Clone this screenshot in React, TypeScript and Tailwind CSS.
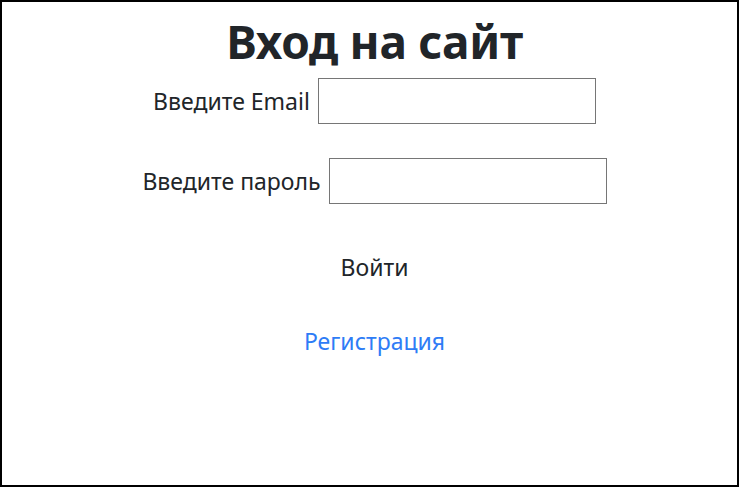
export default function App() {
  return (
    <div className="w-[739px] h-[487px] bg-black p-[2px] box-border">
      <div
        className="w-full h-full bg-white flex flex-col items-center text-[#212529] pl-[10px]"
        style={{ fontFamily: '"Noto Sans", "Open Sans", sans-serif' }}
      >
        <h1 className="text-[46px] font-bold leading-none mt-[16px] tracking-[-0.3px]">Вход на сайт</h1>
        <div className="flex items-center gap-[8px] mt-[14px]">
          <label className="text-[23px]">Введите Email</label>
          <input className="w-[278px] h-[46px] border border-[#767676] outline-none" />
        </div>
        <div className="flex items-center gap-[8px] mt-[34px]">
          <label className="text-[23px]">Введите пароль</label>
          <input type="password" className="w-[278px] h-[46px] border border-[#767676] outline-none" />
        </div>
        <button className="text-[23px] mt-[52px] leading-none">Войти</button>
        <a className="text-[23px] text-[#2e7cf6] mt-[51px] leading-none cursor-pointer">Регистрация</a>
      </div>
    </div>
  );
}
